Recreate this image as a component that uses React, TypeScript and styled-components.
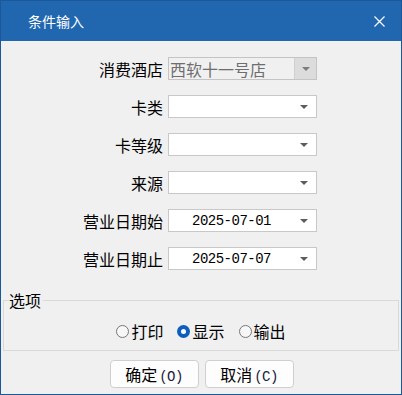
import React from 'react';
import styled, { createGlobalStyle } from 'styled-components';

const GlobalStyle = createGlobalStyle`
  body {
    margin: 0;
    background: #ffffff;
    font-family: "Noto Sans CJK SC", "Liberation Sans", sans-serif;
  }
`;

const Window = styled.div`
  width: 402px;
  height: 395px;
  box-sizing: border-box;
  border: 1px solid #1b5799;
  background: #f0f0f0;
  display: flex;
  flex-direction: column;
`;

const TitleBar = styled.div`
  height: 40px;
  flex: none;
  background: #2167b0;
  display: flex;
  align-items: center;
  justify-content: space-between;
  padding: 0 16px 0 27px;
`;

const Title = styled.span`
  color: #ffffff;
  font-size: 14px;
  line-height: 14px;
`;

const CloseButton = styled.button`
  width: 11px;
  height: 11px;
  padding: 0;
  border: 0;
  background: transparent;
  display: flex;
  cursor: pointer;
`;

const Body = styled.div`
  flex: 1;
  display: flex;
  flex-direction: column;
  padding-top: 16px;
`;

const Form = styled.div`
  display: grid;
  grid-template-columns: 162px 149px;
  grid-auto-rows: 23px;
  column-gap: 5px;
  row-gap: 15px;
`;

const Label = styled.label`
  justify-self: end;
  align-self: center;
  font-size: 16px;
  line-height: 16px;
  color: #000000;
`;

const Select = styled.div<{ $disabled?: boolean }>`
  box-sizing: border-box;
  height: 23px;
  border: 1px solid ${(p) => (p.$disabled ? '#c4c4c4' : '#c8c8c8')};
  background: ${(p) => (p.$disabled ? '#f0f0f0' : '#ffffff')};
  display: flex;
  align-items: center;
`;

const Value = styled.span<{ $mono?: boolean; $disabled?: boolean }>`
  flex: 1;
  padding-left: ${(p) => (p.$mono ? '23px' : '1px')};
  font-family: ${(p) =>
    p.$mono ? '"Liberation Mono", monospace' : '"Noto Sans CJK SC", sans-serif'};
  font-size: ${(p) => (p.$mono ? '14px' : '16px')};
  letter-spacing: ${(p) => (p.$mono ? '-0.5px' : '0')};
  line-height: 16px;
  color: ${(p) => (p.$disabled ? '#6e6e6e' : '#000000')};
  white-space: nowrap;
`;

const ArrowBox = styled.span<{ $disabled?: boolean }>`
  width: ${(p) => (p.$disabled ? '22px' : '24px')};
  height: 100%;
  box-sizing: border-box;
  display: flex;
  align-items: center;
  justify-content: center;
  background: ${(p) => (p.$disabled ? '#dcdcdc' : 'transparent')};
  border-left: ${(p) => (p.$disabled ? '1px solid #d0d0d0' : 'none')};
`;

const Arrow = styled.span<{ $disabled?: boolean }>`
  width: 0;
  height: 0;
  border-left: 4px solid transparent;
  border-right: 4px solid transparent;
  border-top: 4px solid ${(p) => (p.$disabled ? '#7c7c7c' : '#5c5c5c')};
  margin-left: ${(p) => (p.$disabled ? '0' : '-1px')};
`;

const Group = styled.fieldset`
  margin: 22px 2px 0;
  padding: 15px 0 11px;
  border: 1px solid #d9d9d9;
  min-width: 0;
`;

const Legend = styled.legend`
  margin-left: 5px;
  padding: 0 2px 0 0;
  font-size: 16px;
  line-height: 16px;
  color: #000000;
`;

const RadioRow = styled.div`
  display: flex;
  justify-content: center;
  gap: 14px;
  height: 16px;
`;

const RadioItem = styled.label`
  display: flex;
  align-items: center;
  gap: 2px;
  font-size: 16px;
  line-height: 16px;
  color: #000000;
`;

const RadioCircle = styled.span<{ $checked?: boolean }>`
  width: 13px;
  height: 13px;
  box-sizing: border-box;
  border-radius: 50%;
  border: ${(p) => (p.$checked ? 'none' : '1px solid #767676')};
  background: ${(p) => (p.$checked ? '#0b5fbd' : '#f7f7f7')};
  display: flex;
  align-items: center;
  justify-content: center;
  &::after {
    content: '';
    display: ${(p) => (p.$checked ? 'block' : 'none')};
    width: 5px;
    height: 5px;
    border-radius: 50%;
    background: #ffffff;
  }
`;

const Buttons = styled.div`
  display: flex;
  justify-content: center;
  gap: 6px;
  margin-top: 9px;
  padding-left: 1px;
`;

const Button = styled.button`
  width: 89px;
  height: 28px;
  box-sizing: border-box;
  border: 1px solid #cfcfcf;
  border-radius: 4px;
  background: #fdfdfd;
  display: flex;
  align-items: baseline;
  justify-content: center;
  padding: 5px 0 0;
  font-family: "Noto Sans CJK SC", sans-serif;
  font-size: 16px;
  line-height: 16px;
  color: #000000;
`;

const Key = styled.span`
  font-family: "Liberation Mono", monospace;
  font-size: 14px;
  letter-spacing: -0.5px;
  margin-left: 2px;
  color: #1a1a3a;
`;

type Field = { label: string; value: string; mono?: boolean; disabled?: boolean };

const fields: Field[] = [
  { label: '消费酒店', value: '西软十一号店', disabled: true },
  { label: '卡类', value: '' },
  { label: '卡等级', value: '' },
  { label: '来源', value: '' },
  { label: '营业日期始', value: '2025-07-01', mono: true },
  { label: '营业日期止', value: '2025-07-07', mono: true },
];

const options = ['打印', '显示', '输出'];

export default function App() {
  const [selected, setSelected] = React.useState('显示');
  return (
    <>
      <GlobalStyle />
      <Window>
        <TitleBar>
          <Title>条件输入</Title>
          <CloseButton aria-label="close">
            <svg width="11" height="11" viewBox="0 0 11 11">
              <path d="M0.5 0.5 L10.5 10.5 M10.5 0.5 L0.5 10.5" stroke="#ffffff" strokeWidth="1.2" />
            </svg>
          </CloseButton>
        </TitleBar>
        <Body>
          <Form>
            {fields.map((f) => (
              <React.Fragment key={f.label}>
                <Label>{f.label}</Label>
                <Select $disabled={f.disabled}>
                  <Value $mono={f.mono} $disabled={f.disabled}>
                    {f.value}
                  </Value>
                  <ArrowBox $disabled={f.disabled}>
                    <Arrow $disabled={f.disabled} />
                  </ArrowBox>
                </Select>
              </React.Fragment>
            ))}
          </Form>
          <Group>
            <Legend>选项</Legend>
            <RadioRow>
              {options.map((o) => (
                <RadioItem key={o} onClick={() => setSelected(o)}>
                  <RadioCircle $checked={selected === o} />
                  {o}
                </RadioItem>
              ))}
            </RadioRow>
          </Group>
          <Buttons>
            <Button>
              确定<Key>(O)</Key>
            </Button>
            <Button>
              取消<Key>(C)</Key>
            </Button>
          </Buttons>
        </Body>
      </Window>
    </>
  );
}
